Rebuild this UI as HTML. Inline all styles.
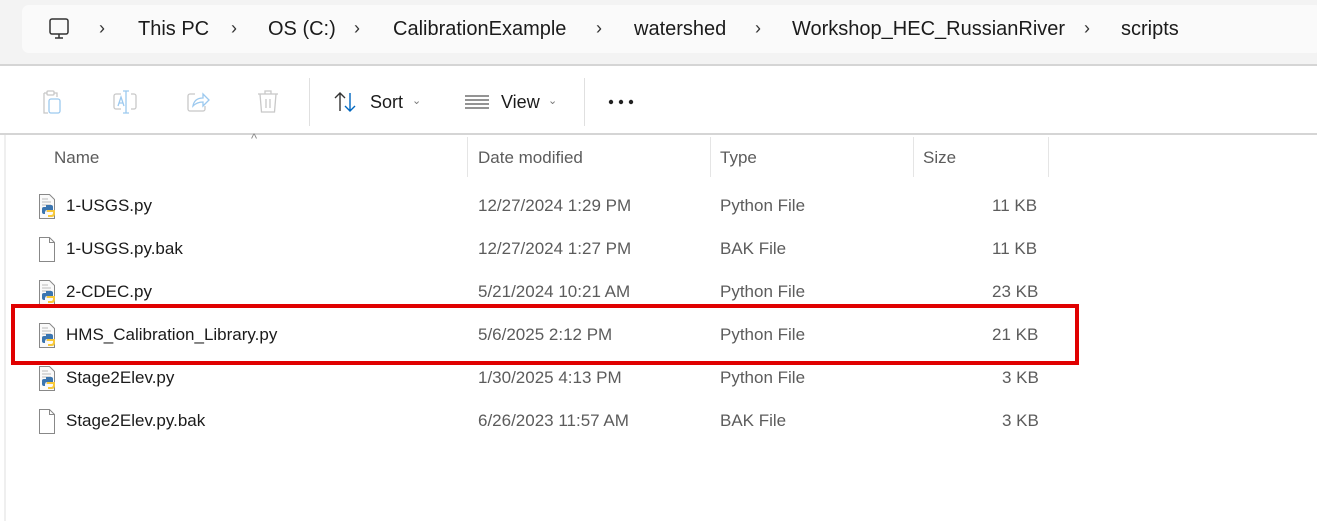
<!DOCTYPE html>
<html><head><style>
body{margin:0;width:1317px;height:521px;background:#fff;position:relative;overflow:hidden;font-family:"Segoe UI","Liberation Sans",sans-serif;}
.a{position:absolute;white-space:nowrap}
.bc{font-size:20px;color:#1b1b1b;top:18px}
.chev{font-size:18px;color:#333;top:18px}
.t{font-size:17px;color:#5c5c5c}
.n{font-size:17px;color:#1b1b1b}
.h{font-size:17px;color:#5c5c5c;top:148px}
.sep{position:absolute;top:137px;height:40px;width:1px;background:#e5e5e5}
</style></head><body>
<div class="a" style="left:0;top:0;width:1317px;height:65px;background:#f3f3f3"></div>
<div class="a" style="left:22px;top:5px;width:1300px;height:48px;background:#fafafa;border-radius:7px"></div>
<div class="a" style="left:0;top:64px;width:1317px;height:2px;background:#d5d5d5"></div>
<div class="a" style="left:0;top:133px;width:1317px;height:2px;background:#d5d5d5"></div>
<svg class="a" style="left:48px;top:17px" width="24" height="24" viewBox="0 0 24 24" fill="none" stroke="#333" stroke-width="1.5"><rect x="2" y="2" width="18" height="15" rx="2"/><path d="M7 21h8M11 17v4"/></svg>
<span class="a chev" style="left:99px">›</span><span class="a bc" style="left:138px">This PC</span>
<span class="a chev" style="left:231px">›</span><span class="a bc" style="left:268px">OS (C:)</span>
<span class="a chev" style="left:354px">›</span><span class="a bc" style="left:393px">CalibrationExample</span>
<span class="a chev" style="left:596px">›</span><span class="a bc" style="left:634px">watershed</span>
<span class="a chev" style="left:755px">›</span><span class="a bc" style="left:792px">Workshop_HEC_RussianRiver</span>
<span class="a chev" style="left:1084px">›</span><span class="a bc" style="left:1121px">scripts</span>
<!-- toolbar icons -->
<svg class="a" style="left:40px;top:89px" width="26" height="26" viewBox="0 0 26 26" fill="none" stroke-width="1.3"><path d="M4 4h3M14 4h3v4M4 4v20h4" stroke="#c8c8c8"/><rect x="7" y="2" width="7" height="4" rx="1" stroke="#c8c8c8"/><rect x="9" y="10" width="11" height="14" rx="2" stroke="#9cc9ef"/></svg>
<svg class="a" style="left:112px;top:89px" width="28" height="26" viewBox="0 0 28 26" fill="none" stroke-width="1.3"><path d="M9 5H4a2 2 0 0 0-2 2v11a2 2 0 0 0 2 2h5M19 5h3a2 2 0 0 1 2 2v11a2 2 0 0 1-2 2h-3" stroke="#c8c8c8"/><path d="M14 2v22M11 2h6M11 24h6M6 17l3-9 3 9M7 14h4" stroke="#9cc9ef"/></svg>
<svg class="a" style="left:185px;top:89px" width="26" height="26" viewBox="0 0 26 26" fill="none" stroke-width="1.3"><path d="M10 5H5a2 2 0 0 0-2 2v13a2 2 0 0 0 2 2h13a2 2 0 0 0 2-2v-3" stroke="#c8c8c8"/><path d="M8 17c1-6 5-8 10-8V5l6 6-6 6v-4c-4 0-7 1-10 4z" stroke="#9cc9ef"/></svg>
<svg class="a" style="left:256px;top:89px" width="24" height="26" viewBox="0 0 24 26" fill="none" stroke="#c8c8c8" stroke-width="1.3"><path d="M2 5h20M9 5V2h6v3M4 5l1.5 18h13L20 5M10 10v9M14 10v9"/></svg>
<div class="a" style="left:309px;top:78px;width:1px;height:48px;background:#e0e0e0"></div>
<div class="a" style="left:584px;top:78px;width:1px;height:48px;background:#e0e0e0"></div>
<svg class="a" style="left:333px;top:91px" width="26" height="22" viewBox="0 0 26 22" fill="none" stroke-width="1.4"><path d="M7 20V2M2 7l5-5 5 5" stroke="#333"/><path d="M17 2v18M12 15l5 5 5-5" stroke="#0067c0"/></svg>
<span class="a" style="left:370px;top:92px;font-size:18px;color:#1b1b1b">Sort</span><span class="a" style="left:412px;top:94px;font-size:11px;color:#777">⌄</span>
<svg class="a" style="left:465px;top:94px" width="24" height="16" viewBox="0 0 24 16" stroke="#555" stroke-width="1.3"><path d="M0 2h24M0 6h24M0 10h24M0 14h24"/></svg>
<span class="a" style="left:501px;top:92px;font-size:18px;color:#1b1b1b">View</span><span class="a" style="left:548px;top:94px;font-size:11px;color:#777">⌄</span>
<svg class="a" style="left:608px;top:99px" width="28" height="6"><circle cx="3" cy="3" r="2.2" fill="#222"/><circle cx="13" cy="3" r="2.2" fill="#222"/><circle cx="23" cy="3" r="2.2" fill="#222"/></svg>
<!-- list -->
<div class="a" style="left:4px;top:135px;width:2px;height:386px;background:#efefef"></div>
<span class="a" style="left:251px;top:131px;font-size:13px;color:#888">^</span>
<span class="a h" style="left:54px">Name</span>
<span class="a h" style="left:478px">Date modified</span>
<span class="a h" style="left:720px">Type</span>
<span class="a h" style="left:923px">Size</span>
<div class="sep" style="left:467px"></div><div class="sep" style="left:710px"></div><div class="sep" style="left:913px"></div><div class="sep" style="left:1048px"></div>

<svg width="0" height="0" style="position:absolute"><defs>
<g id="py"><path d="M1.5 .5h10l5 5v19h-15z" fill="#fafafa" stroke="#888"/><path d="M4 5h6M4 8h9M4 11h9M4 14h9M4 17h9" stroke="#bbb"/><path d="M8 11h5a2 2 0 0 1 2 2v3H9a2 2 0 0 0-2 2v2H6a2 2 0 0 1-2-2v-3a2 2 0 0 1 2-2h2z" fill="#3a75b0"/><path d="M15 16v3a2 2 0 0 1-2 2h-3v2h4a3 3 0 0 0 3-3v-4z M9 16h6v2H9z" fill="#f7c83a"/></g>
<g id="bk"><path d="M1.5 .5h10l5 5v19h-15z" fill="#fff" stroke="#888"/><path d="M11.5 .5v5h5" fill="none" stroke="#888"/></g>
</defs></svg>

<svg class="a" style="left:38px;top:194px" width="20" height="26"><use href="#py"/></svg>
<span class="a n" style="left:66px;top:196px">1-USGS.py</span><span class="a t" style="left:478px;top:196px">12/27/2024 1:29 PM</span><span class="a t" style="left:720px;top:196px">Python File</span><span class="a t" style="left:992px;top:196px">11 KB</span>
<svg class="a" style="left:38px;top:237px" width="20" height="26"><use href="#bk"/></svg>
<span class="a n" style="left:66px;top:239px">1-USGS.py.bak</span><span class="a t" style="left:478px;top:239px">12/27/2024 1:27 PM</span><span class="a t" style="left:720px;top:239px">BAK File</span><span class="a t" style="left:992px;top:239px">11 KB</span>
<svg class="a" style="left:38px;top:280px" width="20" height="26"><use href="#py"/></svg>
<span class="a n" style="left:66px;top:282px">2-CDEC.py</span><span class="a t" style="left:478px;top:282px">5/21/2024 10:21 AM</span><span class="a t" style="left:720px;top:282px">Python File</span><span class="a t" style="left:992px;top:282px">23 KB</span>
<svg class="a" style="left:38px;top:323px" width="20" height="26"><use href="#py"/></svg>
<span class="a n" style="left:66px;top:325px">HMS_Calibration_Library.py</span><span class="a t" style="left:478px;top:325px">5/6/2025 2:12 PM</span><span class="a t" style="left:720px;top:325px">Python File</span><span class="a t" style="left:992px;top:325px">21 KB</span>
<svg class="a" style="left:38px;top:366px" width="20" height="26"><use href="#py"/></svg>
<span class="a n" style="left:66px;top:368px">Stage2Elev.py</span><span class="a t" style="left:478px;top:368px">1/30/2025 4:13 PM</span><span class="a t" style="left:720px;top:368px">Python File</span><span class="a t" style="left:1002px;top:368px">3 KB</span>
<svg class="a" style="left:38px;top:409px" width="20" height="26"><use href="#bk"/></svg>
<span class="a n" style="left:66px;top:411px">Stage2Elev.py.bak</span><span class="a t" style="left:478px;top:411px">6/26/2023 11:57 AM</span><span class="a t" style="left:720px;top:411px">BAK File</span><span class="a t" style="left:1002px;top:411px">3 KB</span>

<div class="a" style="left:11px;top:304px;width:1060px;height:53px;border:4px solid #e00000"></div>
</body></html>
